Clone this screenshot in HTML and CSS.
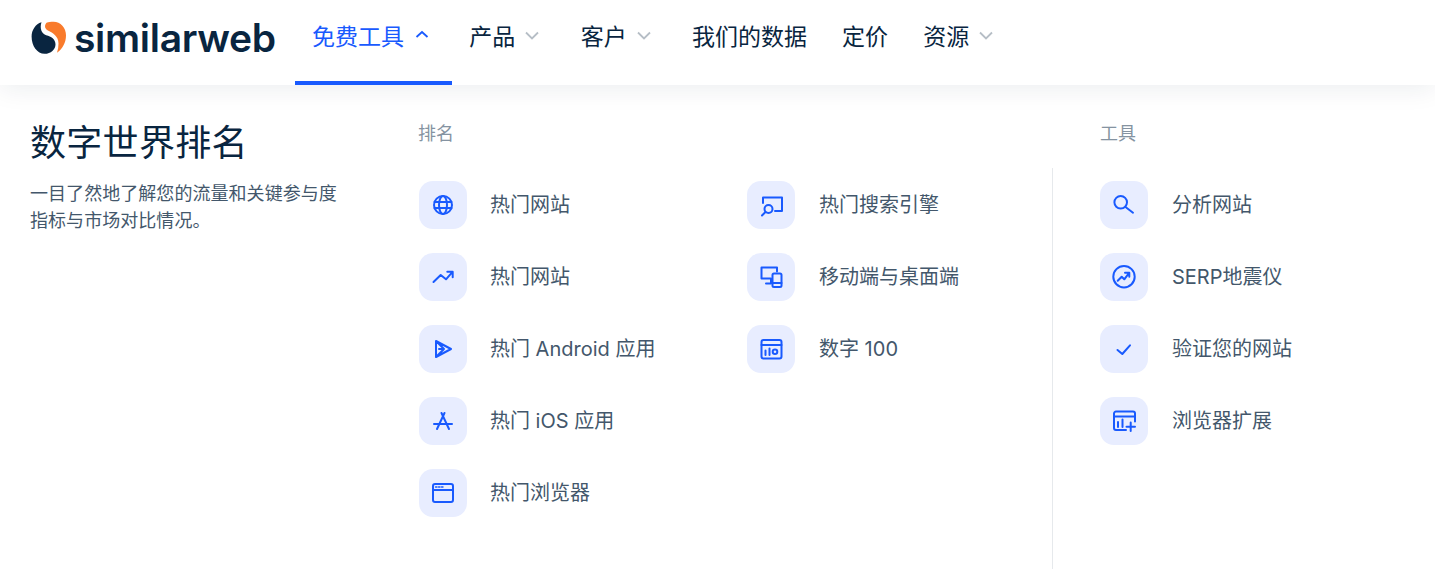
FILE: index.html
```html
<!DOCTYPE html>
<html lang="zh-CN">
<head>
    <meta charset="UTF-8">
    <meta name="viewport" content="width=device-width, initial-scale=1.0">
    <title>Similarweb</title>
    <link rel="stylesheet" href="styles.css">
</head>
<body>

    <header class="topbar">
        <a class="logo" href="#">
            <svg class="logo-mark" width="36" height="34" viewBox="0 0 36 34">
                <path fill="#092540" d="M10.500 1.200C4.500 3 .6 9 .6 15.500c0 9.500 5.600 17.300 13 17.300 6.300 0 10.900-4.400 10.900-9.600 0-5-4.300-7.900-9.300-9C11 13 8.300 7.500 10.500 1.200z"/>
                <path fill="#f97b2c" d="M15.500 1.700c-2.200 2.300-2 5.600 1 7.500 5 2.700 11 5.500 11 13.300 0 3.200-.5 6.300-1.500 9.300 5.500-4 9-10.200 9-17.300C35 6.800 29.500.8 22.500.8c-2.700 0-5 .2-7 .9z"/>
            </svg>
            <span class="logo-text">similarweb</span>
        </a>
        <nav class="nav">
            <a class="nav-item active" href="#">免费工具
                <svg class="chev" width="20" height="14" viewBox="0 0 20 14"><path d="M2.500 9l5.500-5 5.500 5"/></svg>
            </a>
            <a class="nav-item drop" href="#">产品
                <svg class="chev" width="20" height="14" viewBox="0 0 20 14"><path d="M1 4.500l6 6 6-6"/></svg>
            </a>
            <a class="nav-item drop" href="#">客户
                <svg class="chev" width="20" height="14" viewBox="0 0 20 14"><path d="M1 4.500l6 6 6-6"/></svg>
            </a>
            <a class="nav-item" href="#">我们的数据</a>
            <a class="nav-item" href="#">定价</a>
            <a class="nav-item drop" href="#">资源
                <svg class="chev" width="20" height="14" viewBox="0 0 20 14"><path d="M1 4.500l6 6 6-6"/></svg>
            </a>
        </nav>
    </header>

    <main class="panel">
        <div class="intro">
            <h1>数字世界排名</h1>
            <p>一目了然地了解您的流量和关键参与度<br>指标与市场对比情况。</p>
        </div>

        <section class="rank">
            <h2 class="label">排名</h2>
            <div class="rank-list">
                <a class="item" href="#">
                    <span class="tile"><svg class="ico" viewBox="0 0 24 24"><circle cx="12" cy="12" r="9"/><ellipse cx="12" cy="12" rx="4" ry="9"/><path d="M3.500 9h17M3.500 15h17"/></svg></span>
                    <span class="item-text">热门网站</span>
                </a>
                <a class="item" href="#">
                    <span class="tile"><svg class="ico" viewBox="0 0 24 24"><path d="M2.500 17l7.200-7 5.300 4.300 6.700-7.600M16.300 6.700h5.400v5.600"/></svg></span>
                    <span class="item-text">热门网站</span>
                </a>
                <a class="item" href="#">
                    <span class="tile"><svg class="ico" viewBox="0 0 24 24"><path d="M5 4l15 8-15 8zM5 4l8 8-8 8M13 12H8"/></svg></span>
                    <span class="item-text">热门 Android 应用</span>
                </a>
                <a class="item" href="#">
                    <span class="tile"><svg class="ico" viewBox="0 0 24 24"><path d="M10.500 4L18 20M13.500 4L6 20M3 15h18"/></svg></span>
                    <span class="item-text">热门 iOS 应用</span>
                </a>
                <a class="item" href="#">
                    <span class="tile"><svg class="ico" viewBox="0 0 24 24"><rect x="2" y="3" width="20" height="18" rx="2"/><path d="M2 9h20"/><path class="dots" d="M4.500 6h1.500M7.500 6h1.500M10.500 6h1.500"/></svg></span>
                    <span class="item-text">热门浏览器</span>
                </a>
                <a class="item wide" href="#">
                    <span class="tile"><svg class="ico" viewBox="0 0 24 24"><path d="M4 10V4.500h19V18h-7"/><circle cx="9.500" cy="16" r="4"/><path d="M6.500 19L3 22.500"/></svg></span>
                    <span class="item-text">热门搜索引擎</span>
                </a>
                <a class="item wide" href="#">
                    <span class="tile"><svg class="ico" viewBox="0 0 24 24"><path d="M18 6.500V2.500H2.500v11H12v5H7"/><rect x="13.500" y="8.500" width="9" height="13.500" rx="1.500"/><path d="M13.500 18h9"/></svg></span>
                    <span class="item-text">移动端与桌面端</span>
                </a>
                <a class="item wide" href="#">
                    <span class="tile"><svg class="ico" viewBox="0 0 24 24"><rect x="2.500" y="3" width="20" height="18.500" rx="2"/><path d="M2.500 8h20M6.500 13.500V18M10.500 11.500V18"/><circle cx="16" cy="14.700" r="2.300"/></svg></span>
                    <span class="item-text">数字 100</span>
                </a>
            </div>
        </section>

        <section class="tools">
            <h2 class="label">工具</h2>
            <div class="tools-list">
                <a class="item wide" href="#">
                    <span class="tile"><svg class="ico" viewBox="0 0 24 24"><circle cx="8.700" cy="9.300" r="6.300"/><path d="M13.500 14l7.500 5.700"/></svg></span>
                    <span class="item-text">分析网站</span>
                </a>
                <a class="item wide" href="#">
                    <span class="tile"><svg class="ico" viewBox="0 0 24 24"><circle cx="12" cy="11.700" r="10.700"/><path d="M5.700 15.700l4-4 2.600 2.600 5-6.600M13 7.700h4.300v4"/></svg></span>
                    <span class="item-text">SERP地震仪</span>
                </a>
                <a class="item wide" href="#">
                    <span class="tile"><svg class="ico" viewBox="0 0 24 24"><path d="M5.500 13l4.800 4 7.700-8.700"/></svg></span>
                    <span class="item-text">验证您的网站</span>
                </a>
                <a class="item wide" href="#">
                    <span class="tile"><svg class="ico" viewBox="0 0 24 24"><path d="M14 21H4a2 2 0 0 1-2-2V4.500a2 2 0 0 1 2-2h17a2 2 0 0 1 2 2v8M2 7.500h21M6 13v5M10.500 10.500V18M18.700 13.500V22M14.500 17.700H23"/></svg></span>
                    <span class="item-text">浏览器扩展</span>
                </a>
            </div>
        </section>
    </main>

</body>
</html>
```

FILE: styles.css
```css
body {
    margin: 0;
    height: 569px;
    overflow: hidden;
    background: #fff;
    color: #092540;
    font-family: "Inter", "Noto Sans CJK SC", sans-serif;
}
a {
    color: inherit;
    text-decoration: none;
}
.topbar {
    display: flex;
    height: 85px;
    padding-left: 31px;
    box-shadow: 0 4px 24px rgba(9, 37, 64, 0.08);
}
.logo {
    display: flex;
    align-items: center;
    gap: 7px;
    width: 264px;
    height: 75px;
}
.logo-text {
    font-size: 39px;
    font-weight: 600;
    letter-spacing: -0.3px;
}
.nav {
    display: flex;
}
.nav-item {
    display: flex;
    align-items: center;
    gap: 10px;
    height: 70px;
    padding: 0 17.5px 11px;
    font-size: 23px;
    border-bottom: 4px solid transparent;
}
.nav-item.drop {
    padding-left: 17.75px;
    padding-right: 17.75px;
}
.nav-item.active {
    padding-left: 17px;
    color: #195afe;
    border-bottom-color: #195afe;
}
.chev {
    fill: none;
    stroke: #b6bec6;
    stroke-width: 1.8;
}
.active .chev {
    stroke: #195afe;
}
.panel {
    display: flex;
    padding-left: 30px;
}
.intro {
    width: 389px;
}
h1 {
    margin: 34px 0 0;
    font-size: 36px;
    font-weight: 400;
    line-height: 48px;
    letter-spacing: 0.3px;
}
.intro p {
    margin: 13px 0 0;
    font-size: 18px;
    line-height: 27px;
    letter-spacing: 0.05px;
    color: #43576b;
}
.rank {
    width: 633px;
}
.label {
    margin: 35px 0 0 -1px;
    font-size: 18px;
    font-weight: 400;
    line-height: 28px;
    color: #8593a1;
}
.rank-list {
    display: grid;
    grid-auto-flow: column;
    grid-template-rows: repeat(5, 48px);
    grid-template-columns: 328px 1fr;
    row-gap: 24px;
    margin-top: 33px;
}
.tools .label {
    margin-left: 48px;
}
.tools-list {
    display: flex;
    flex-direction: column;
    gap: 24px;
    height: 388px;
    margin-top: 20px;
    padding: 13px 0 0 47px;
    border-left: 1px solid #e6e9ec;
}
.item {
    display: flex;
    align-items: center;
    gap: 23px;
    font-size: 20px;
    color: #43576b;
}
.item.wide {
    gap: 24px;
}
.item-text {
    margin-bottom: 4px;
}
.tile {
    display: flex;
    align-items: center;
    justify-content: center;
    width: 48px;
    height: 48px;
    border-radius: 14px;
    background: #e8edff;
}
.ico {
    width: 24px;
    height: 24px;
    fill: none;
    stroke: #195afe;
    stroke-width: 2;
    stroke-linecap: round;
    stroke-linejoin: round;
}
.ico .dots {
    stroke-width: 1.4;
}
```
